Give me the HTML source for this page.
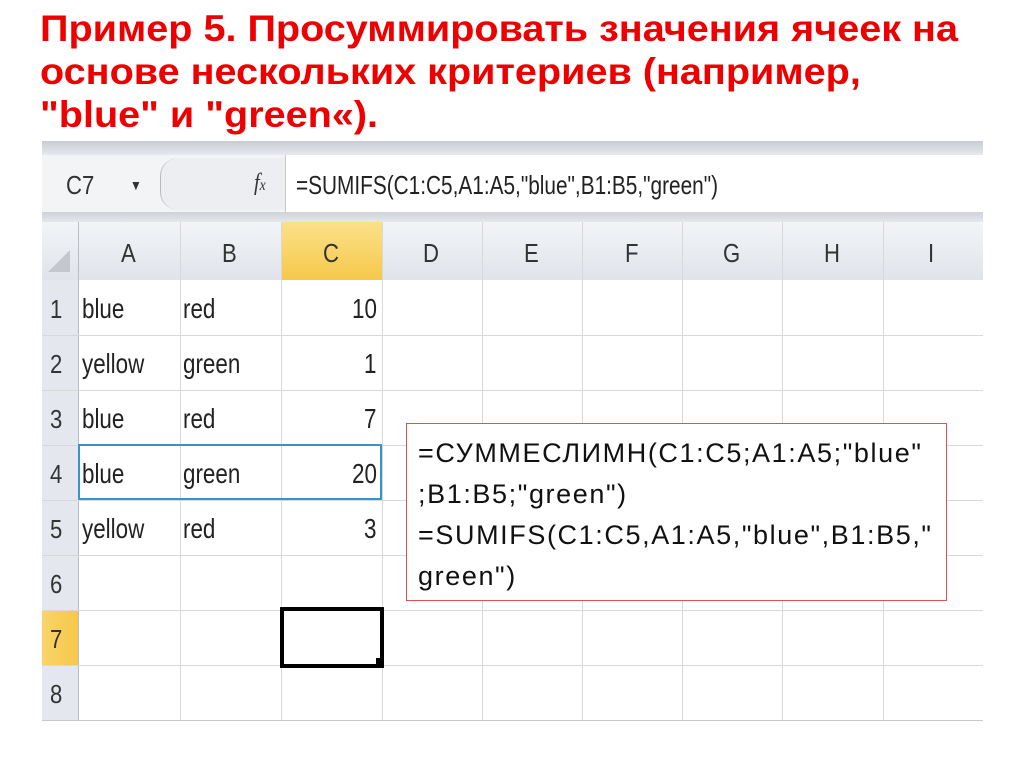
<!DOCTYPE html>
<html><head><meta charset="utf-8"><style>
body{margin:0;width:1024px;height:767px;background:#fff;position:relative;overflow:hidden;font-family:"Liberation Sans","DejaVu Sans",sans-serif}
.t{position:absolute;left:40px;color:#ee0000;font-weight:bold;font-size:37px;white-space:nowrap;transform-origin:0 0;transform:scaleX(1.07);line-height:43px}
.a{position:absolute}
.c{position:absolute;font-size:28px;color:#222;transform-origin:0 0;transform:scaleX(0.8);white-space:nowrap;line-height:30px}
.h{position:absolute;font-size:26px;color:#333;white-space:nowrap;line-height:30px;transform-origin:0 0;transform:scaleX(0.85)}
.vl{position:absolute;width:1px;background:#d8d8d8}
.hl{position:absolute;height:1px;background:#d8d8d8}
</style></head><body>
<div class="t" style="top:7px">Пример 5. Просуммировать значения ячеек на</div>
<div class="t" style="top:50px">основе нескольких критериев (например,</div>
<div class="t" style="top:93px">"blue" и "green«).</div>

<div class="a" style="left:42px;top:141px;width:941px;height:14px;background:linear-gradient(#c8ccd2,#e6e9ee)"></div>
<div class="a" style="left:42px;top:155px;width:941px;height:57px;background:#f3f4f6"></div>
<div class="a" style="left:42px;top:212px;width:941px;height:10px;background:linear-gradient(#cfd3d9,#e4e7ec)"></div>
<div class="a" style="left:160px;top:158px;width:125px;height:52px;background:#eceef1;border-left:1px solid #b8bcc2;border-radius:18px 0 0 18px"></div>
<div class="a" style="left:285px;top:155px;width:698px;height:57px;background:#fff;border-left:1px solid #c8c8c8"></div>
<div class="h" style="left:66px;top:170px">C7</div>
<div class="h" style="left:130px;top:170px;font-size:14px">▼</div>
<div class="h" style="left:254px;top:168px;font-family:'Liberation Serif',serif;font-style:italic;font-size:24px">f<span style="font-size:16px">x</span></div>
<div class="c" style="left:296px;top:170px;font-size:26px;transform:scaleX(.8)">=SUMIFS(C1:C5,A1:A5,"blue",B1:B5,"green")</div>

<div class="a" style="left:42px;top:222px;width:941px;height:58px;background:linear-gradient(#f2f4f7,#e0e4ea);border-bottom:1px solid #b5bcc6"></div>
<div class="a" style="left:281px;top:222px;width:101px;height:58px;background:linear-gradient(#fbe08a,#f6c84a);border-bottom:1px solid #d9a53a"></div>
<div class="a" style="left:42px;top:280px;width:36px;height:440px;background:#e4e8ee"></div>
<div class="a" style="left:42px;top:610px;width:36px;height:55px;background:linear-gradient(90deg,#f9d46a,#f6c84a)"></div>
<div class="a" style="left:78px;top:280px;width:905px;height:440px;background:#fff"></div>
<div class="a" style="left:48px;top:250px;width:0;height:0;border-left:22px solid transparent;border-bottom:22px solid #c4c8ce"></div>

<div class="vl" style="left:78px;top:222px;height:498px;background:#b8bec8"></div>
<div class="vl" style="left:180px;top:222px;height:498px"></div>
<div class="vl" style="left:281px;top:222px;height:498px"></div>
<div class="vl" style="left:382px;top:222px;height:498px"></div>
<div class="vl" style="left:482px;top:222px;height:498px"></div>
<div class="vl" style="left:582px;top:222px;height:498px"></div>
<div class="vl" style="left:682px;top:222px;height:498px"></div>
<div class="vl" style="left:782px;top:222px;height:498px"></div>
<div class="vl" style="left:883px;top:222px;height:498px"></div>
<div class="hl" style="left:42px;top:335px;width:941px"></div>
<div class="hl" style="left:42px;top:390px;width:941px"></div>
<div class="hl" style="left:42px;top:445px;width:941px"></div>
<div class="hl" style="left:42px;top:500px;width:941px"></div>
<div class="hl" style="left:42px;top:555px;width:941px"></div>
<div class="hl" style="left:42px;top:610px;width:941px"></div>
<div class="hl" style="left:42px;top:665px;width:941px"></div>
<div class="hl" style="left:42px;top:720px;width:941px;background:#c8c8c8"></div>

<div class="h" style="left:121px;top:238px">A</div>
<div class="h" style="left:222px;top:238px">B</div>
<div class="h" style="left:323px;top:238px">C</div>
<div class="h" style="left:423px;top:238px">D</div>
<div class="h" style="left:524px;top:238px">E</div>
<div class="h" style="left:625px;top:238px">F</div>
<div class="h" style="left:723px;top:238px">G</div>
<div class="h" style="left:824px;top:238px">H</div>
<div class="h" style="left:928px;top:238px">I</div>

<div class="h" style="left:50px;top:294px">1</div>
<div class="h" style="left:50px;top:349px">2</div>
<div class="h" style="left:50px;top:404px">3</div>
<div class="h" style="left:50px;top:459px">4</div>
<div class="h" style="left:50px;top:514px">5</div>
<div class="h" style="left:50px;top:569px">6</div>
<div class="h" style="left:50px;top:624px">7</div>
<div class="h" style="left:50px;top:679px">8</div>

<div class="c" style="left:82px;top:294px">blue</div><div class="c" style="left:183px;top:294px">red</div><div class="c" style="left:352px;top:294px">10</div>
<div class="c" style="left:82px;top:349px">yellow</div><div class="c" style="left:183px;top:349px">green</div><div class="c" style="left:364px;top:349px">1</div>
<div class="c" style="left:82px;top:404px">blue</div><div class="c" style="left:183px;top:404px">red</div><div class="c" style="left:364px;top:404px">7</div>
<div class="c" style="left:82px;top:459px">blue</div><div class="c" style="left:183px;top:459px">green</div><div class="c" style="left:352px;top:459px">20</div>
<div class="c" style="left:82px;top:514px">yellow</div><div class="c" style="left:183px;top:514px">red</div><div class="c" style="left:364px;top:514px">3</div>

<div class="a" style="left:78px;top:444px;width:300px;height:52px;border:2px solid #3a93c8"></div>
<div class="a" style="left:280px;top:607px;width:96px;height:53px;border:4px solid #000"></div>
<div class="a" style="left:376px;top:658px;width:8px;height:8px;background:#000"></div>

<div class="a" style="left:406px;top:423px;width:539px;height:176px;border:1px solid #e05050;background:#fff"></div>
<div class="a" style="left:418px;top:433px;font-size:27px;letter-spacing:1.6px;line-height:41px;color:#111;white-space:nowrap">=СУММЕСЛИМН(C1:C5;A1:A5;"blue"<br>;B1:B5;"green")<br>=SUMIFS(C1:C5,A1:A5,"blue",B1:B5,"<br>green")</div>
</body></html>
